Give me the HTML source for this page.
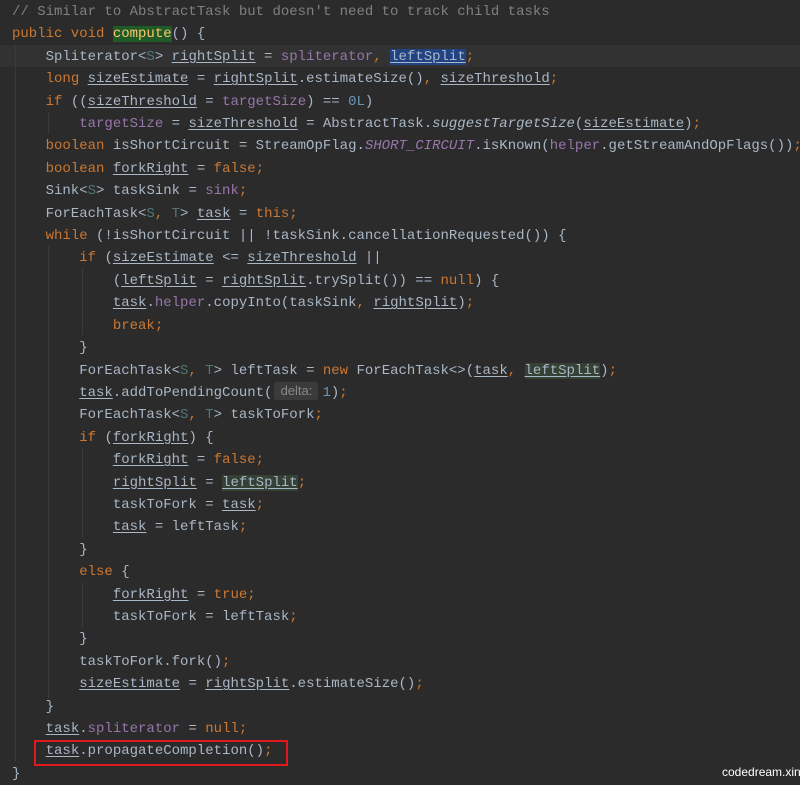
<!DOCTYPE html>
<html><head><meta charset="utf-8"><style>
html,body{margin:0;padding:0;background:#2b2b2b;width:800px;height:785px;overflow:hidden;position:relative}
pre{margin:0;position:absolute;left:12px;top:1px;font:14px/22.4px "Liberation Mono",monospace;color:#a9b7c6;white-space:pre;z-index:2}
.cl{position:absolute;left:0;top:44.8px;width:800px;height:22.4px;background:#323232;z-index:0}
.gd{position:absolute;width:1px;background:#3a3a3a;z-index:1}
.c{color:#808080}.k{color:#cc7832}.f{color:#9876aa}.g{color:#507874}.n{color:#6897bb}.y{color:#ffc66d}
.i{font-style:italic}.u{text-decoration:underline;text-underline-offset:2px}
.hb{background:#214283}.hg{background:#344134}.hc{background:#1f5a27}
.hint{display:inline-block;width:44px;margin:0 4px 0 2px;background:#3b3b3b;color:#8a8a8a;font:13px/18px "Liberation Sans",sans-serif;text-align:center;border-radius:3px;vertical-align:1px}
.box{position:absolute;left:34px;top:740px;width:250px;height:22px;border:2px solid #e0191c;z-index:3}
.wm{position:absolute;left:722px;top:765px;color:#fff;font:12px "Liberation Sans",sans-serif;z-index:3}
</style></head><body>
<div class="cl"></div>
<div class="gd" style="left:15px;top:45px;height:717px"></div>
<div class="gd" style="left:48px;top:112px;height:22px"></div>
<div class="gd" style="left:48px;top:246px;height:452px"></div>
<div class="gd" style="left:82px;top:268px;height:67px"></div>
<div class="gd" style="left:82px;top:448px;height:90px"></div>
<div class="gd" style="left:82px;top:582px;height:45px"></div>
<pre><span class="c">// Similar to AbstractTask but doesn't need to track child tasks</span>
<span class="k">public void </span><span class="hc y">compute</span>() {
    Spliterator&lt;<span class="g">S</span>&gt; <span class="u">rightSplit</span> = <span class="f">spliterator</span><span class="k">, </span><span class="u hb">leftSplit</span><span class="k">;</span>
    <span class="k">long </span><span class="u">sizeEstimate</span> = <span class="u">rightSplit</span>.estimateSize()<span class="k">, </span><span class="u">sizeThreshold</span><span class="k">;</span>
    <span class="k">if </span>((<span class="u">sizeThreshold</span> = <span class="f">targetSize</span>) == <span class="n">0L</span>)
        <span class="f">targetSize</span> = <span class="u">sizeThreshold</span> = AbstractTask.<span class="i">suggestTargetSize</span>(<span class="u">sizeEstimate</span>)<span class="k">;</span>
    <span class="k">boolean </span>isShortCircuit = StreamOpFlag.<span class="f i">SHORT_CIRCUIT</span>.isKnown(<span class="f">helper</span>.getStreamAndOpFlags())<span class="k">;</span>
    <span class="k">boolean </span><span class="u">forkRight</span> = <span class="k">false;</span>
    Sink&lt;<span class="g">S</span>&gt; taskSink = <span class="f">sink</span><span class="k">;</span>
    ForEachTask&lt;<span class="g">S</span><span class="k">, </span><span class="g">T</span>&gt; <span class="u">task</span> = <span class="k">this;</span>
    <span class="k">while </span>(!isShortCircuit || !taskSink.cancellationRequested()) {
        <span class="k">if </span>(<span class="u">sizeEstimate</span> &lt;= <span class="u">sizeThreshold</span> ||
            (<span class="u">leftSplit</span> = <span class="u">rightSplit</span>.trySplit()) == <span class="k">null</span>) {
            <span class="u">task</span>.<span class="f">helper</span>.copyInto(taskSink<span class="k">, </span><span class="u">rightSplit</span>)<span class="k">;</span>
            <span class="k">break;</span>
        }
        ForEachTask&lt;<span class="g">S</span><span class="k">, </span><span class="g">T</span>&gt; leftTask = <span class="k">new </span>ForEachTask&lt;&gt;(<span class="u">task</span><span class="k">, </span><span class="u hg">leftSplit</span>)<span class="k">;</span>
        <span class="u">task</span>.addToPendingCount(<span class="hint">delta:</span><span class="n">1</span>)<span class="k">;</span>
        ForEachTask&lt;<span class="g">S</span><span class="k">, </span><span class="g">T</span>&gt; taskToFork<span class="k">;</span>
        <span class="k">if </span>(<span class="u">forkRight</span>) {
            <span class="u">forkRight</span> = <span class="k">false;</span>
            <span class="u">rightSplit</span> = <span class="u hg">leftSplit</span><span class="k">;</span>
            taskToFork = <span class="u">task</span><span class="k">;</span>
            <span class="u">task</span> = leftTask<span class="k">;</span>
        }
        <span class="k">else </span>{
            <span class="u">forkRight</span> = <span class="k">true;</span>
            taskToFork = leftTask<span class="k">;</span>
        }
        taskToFork.fork()<span class="k">;</span>
        <span class="u">sizeEstimate</span> = <span class="u">rightSplit</span>.estimateSize()<span class="k">;</span>
    }
    <span class="u">task</span>.<span class="f">spliterator</span> = <span class="k">null;</span>
    <span class="u">task</span>.propagateCompletion()<span class="k">;</span>
}</pre>
<div class="box"></div>
<div class="wm">codedream.xin</div>
</body></html>
